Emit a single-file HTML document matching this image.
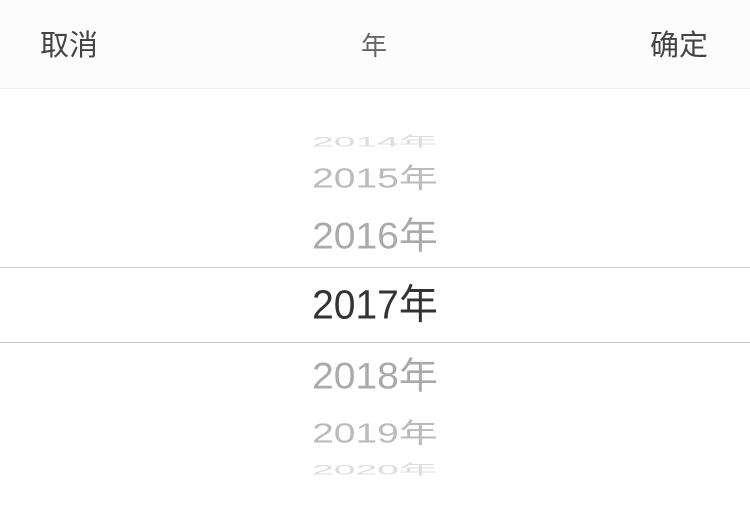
<!DOCTYPE html>
<html><head><meta charset="utf-8"><style>
html,body{margin:0;padding:0;width:750px;height:520px;background:#fff;overflow:hidden;font-family:"Liberation Sans","Noto Sans CJK SC",sans-serif}
.hd{position:absolute;left:0;top:0;width:750px;height:88px;background:#fcfcfc;border-bottom:1px solid #ececec}
.hd span{position:absolute;top:28px;font-size:29px;line-height:36px;color:#444}
.line{position:absolute;left:0;width:750px;height:1px;background:#c8c8c8}
.it{position:absolute;left:0;width:750px;text-align:center;font-size:39px;line-height:40px;height:40px;letter-spacing:0}
</style></head><body>
<div class="hd">
<span style="left:40px">取消</span>
<span style="left:361px;font-size:26px;color:#666">年</span>
<span style="left:650px">确定</span>
</div>
<div class="line" style="top:267px"></div>
<div class="line" style="top:342px"></div>
<div class="it" style="top:122px;color:#ddd;transform:scaleY(0.36)">2014年</div>
<div class="it" style="top:159px;color:#bbb;transform:scaleY(0.7)">2015年</div>
<div class="it" style="top:217px;color:#aaa;transform:scaleY(0.95)">2016年</div>
<div class="it" style="top:286px;color:#333;transform:scaleY(1.05)">2017年</div>
<div class="it" style="top:357px;color:#aaa;transform:scaleY(0.95)">2018年</div>
<div class="it" style="top:414px;color:#bbb;transform:scaleY(0.7)">2019年</div>
<div class="it" style="top:450px;color:#ddd;transform:scaleY(0.36)">2020年</div>
</body></html>
